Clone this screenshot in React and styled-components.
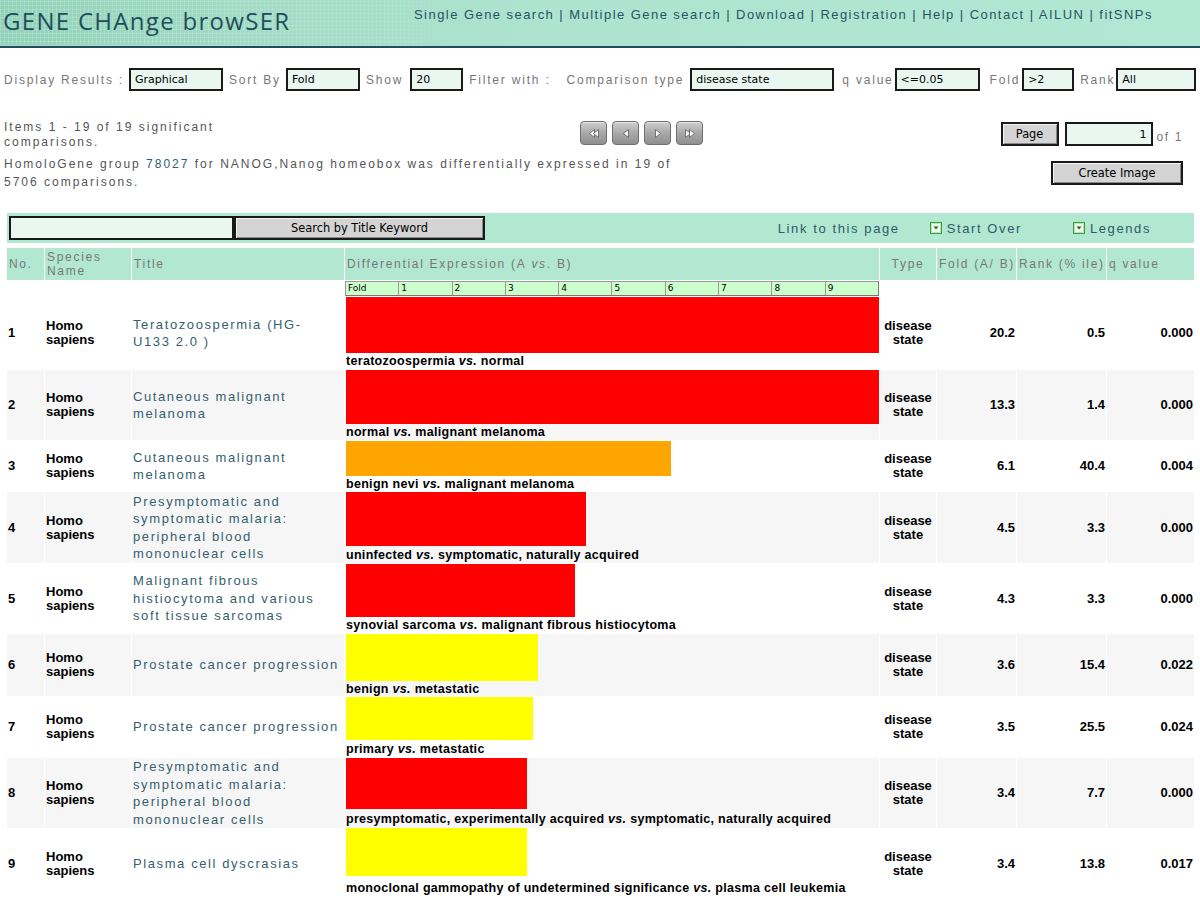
import React from 'react';
import styled, { createGlobalStyle } from 'styled-components';

const MINT = '#b2e7d2';
const RED = '#ff0000';
const ORANGE = '#ffa500';
const YELLOW = '#ffff00';
const COLS = '37px 86px 212px 534px 56px 79px 89px 87px';

const GlobalStyle = createGlobalStyle`
  body {
    margin: 0;
    background: #fff;
    font-family: "Liberation Sans", Arial, sans-serif;
  }
`;

const Page = styled.div`
  width: 1200px;
`;

const Header = styled.header`
  position: relative;
  height: 46px;
  border-bottom: 2px solid #1f4d5a;
  display: grid;
  grid-template-columns: 414px 1fr;
  background: linear-gradient(90deg, #92d2b9 0%, #a3ddc7 25%, #ace4cf 45%, #b0e8d4 100%);
  overflow: hidden;

  &::before {
    content: '';
    position: absolute;
    left: 0;
    top: 0;
    width: 520px;
    height: 100%;
    background:
      repeating-linear-gradient(90deg, rgba(255, 255, 255, 0.16) 0 1px, transparent 1px 4px),
      repeating-linear-gradient(0deg, rgba(255, 255, 255, 0.16) 0 1px, transparent 1px 4px);
    -webkit-mask-image: linear-gradient(90deg, #000 0%, #000 40%, transparent 100%);
    mask-image: linear-gradient(90deg, #000 0%, #000 40%, transparent 100%);
  }
`;

const Logo = styled.div`
  position: relative;
  font-family: "Open Sans", "Noto Sans", sans-serif;
  font-size: 24px;
  letter-spacing: 1.3px;
  color: #1f4d5c;
  padding: 7px 0 0 3px;
  line-height: 28px;
`;

const Nav = styled.nav`
  position: relative;
  font-size: 13px;
  letter-spacing: 1.45px;
  color: #29535f;
  padding-top: 7px;
  line-height: 16px;
  white-space: nowrap;
`;

const FilterBar = styled.div`
  display: flex;
  align-items: center;
  gap: 5px;
  margin-top: 20px;
  padding-left: 4px;
  height: 23px;
`;

const FieldLabel = styled.span`
  font-size: 12px;
  letter-spacing: 1.8px;
  color: #777;
  white-space: nowrap;
  margin-left: ${(p) => p.$space || 0}px;
`;

const Field = styled.div`
  width: ${(p) => p.$w}px;
  height: ${(p) => p.$h || 23}px;
  box-sizing: border-box;
  border: 2px solid #1a1a1a;
  background: #eaf7f1;
  font-family: "DejaVu Sans", sans-serif;
  font-size: 11px;
  color: #000;
  padding: 0 4px;
  display: flex;
  align-items: center;
  justify-content: ${(p) => (p.$right ? 'flex-end' : 'flex-start')};
  margin-left: ${(p) => p.$space || 0}px;
`;

const GreyButton = styled.div`
  width: ${(p) => p.$w}px;
  height: 24px;
  box-sizing: border-box;
  border: 2px solid #1a1a1a;
  box-shadow: inset 1px 1px #f4f4f4, inset -1px -1px #8a8a8a;
  background: #d4d4d4;
  font-family: "DejaVu Sans", sans-serif;
  font-size: 11.4px;
  color: #000;
  display: flex;
  align-items: center;
  justify-content: center;
`;

const Info = styled.div`
  display: grid;
  grid-template-columns: 215px 484px 1fr;
  row-gap: 5px;
  margin-top: 29px;
  padding-left: 4px;
`;

const InfoText = styled.p`
  margin: 0;
  font-size: 12px;
  letter-spacing: 2px;
  color: #555;
  line-height: ${(p) => p.$lh}px;
  grid-column: ${(p) => p.$span || 'auto'};
  max-width: ${(p) => (p.$span ? '690px' : 'none')};
`;

const GeneLink = styled.a`
  color: #2b6273;
  text-decoration: none;
`;

const Pager = styled.div`
  justify-self: end;
  display: flex;
  gap: 5px;
  margin-top: 1px;
`;

const PagerButton = styled.div`
  width: 27px;
  height: 24px;
  box-sizing: border-box;
  border: 1px solid #6f6f6f;
  border-radius: 4px;
  background: linear-gradient(180deg, #cfcfcf 0%, #a9a9a9 50%, #8e8e8e 100%);
  box-shadow: inset 0 1px #e6e6e6;
  display: flex;
  align-items: center;
  justify-content: center;
`;

const PageControls = styled.div`
  grid-column: 3;
  justify-self: end;
  margin-right: 17px;
  margin-top: ${(p) => p.$top}px;
  display: flex;
  align-items: center;
  gap: 6px;
`;

const OfText = styled.span`
  font-size: 12px;
  letter-spacing: 1.6px;
  color: #777;
  margin-left: -2px;
  padding-top: 6px;
`;

const SearchBand = styled.div`
  margin: 22px 6px 0 7px;
  height: 30px;
  background: ${MINT};
  display: flex;
  align-items: center;
  padding-left: 2px;
`;

const BandLinks = styled.div`
  margin-left: auto;
  padding-right: 43px;
  display: flex;
  align-items: center;
`;

const BandLink = styled.span`
  font-size: 13px;
  letter-spacing: 1.6px;
  color: #2e5b68;
  display: flex;
  align-items: center;
  gap: 5px;
  margin-left: ${(p) => p.$space || 0}px;
`;

const Table = styled.div`
  margin: 5px 0 0 7px;
  width: 1187px;
  display: flex;
  flex-direction: column;
  gap: 1px;
`;

const Row = styled.div`
  display: grid;
  grid-template-columns: ${COLS};
  column-gap: 1px;
  height: ${(p) => p.$h}px;
`;

const HeadCell = styled.div`
  background: ${MINT};
  color: #777;
  font-size: 12px;
  letter-spacing: 1.7px;
  line-height: 14px;
  display: flex;
  align-items: center;
  justify-content: ${(p) => (p.$center ? 'center' : 'flex-start')};
  padding-left: ${(p) => (p.$center ? 0 : 2)}px;
  white-space: ${(p) => (p.$wrap ? 'normal' : 'nowrap')};
`;

const Scale = styled.div`
  grid-column: 4;
  display: flex;
  border: 1px solid #9a9a9a;
  border-right-color: #777;
  border-bottom-color: #777;
  background: #ccffcc;
`;

const ScaleCell = styled.div`
  flex: 1;
  border-left: 1px solid #9a9a9a;
  font-family: "DejaVu Sans", sans-serif;
  font-size: 9px;
  line-height: 13px;
  padding-left: 2px;
  color: #000;

  &:first-child {
    border-left: none;
  }
`;

const Cell = styled.div`
  background: ${(p) => (p.$shade ? '#f6f6f6' : '#fff')};
  display: flex;
  align-items: center;
  justify-content: ${(p) => p.$justify || 'flex-start'};
  text-align: ${(p) => p.$align || 'left'};
  font-size: 13px;
  font-weight: bold;
  color: #000;
  line-height: 14px;
  padding: 0 1px;
`;

const TitleText = styled.div`
  font-weight: normal;
  letter-spacing: 1.6px;
  color: #34606f;
  line-height: 17.5px;
  white-space: pre;
`;

const ExprCell = styled.div`
  background: ${(p) => (p.$shade ? '#f6f6f6' : '#fff')};
  display: flex;
  flex-direction: column;
  padding-left: 1px;
`;

const Bar = styled.div`
  height: ${(p) => p.$h}px;
  background: ${(p) => p.$color};
  flex-shrink: 0;
`;

const BarLabel = styled.div`
  flex: 1;
  display: flex;
  align-items: center;
  font-size: 12.5px;
  font-weight: bold;
  letter-spacing: 0.3px;
  white-space: nowrap;
  color: #000;
`;

const rows = [
  { title: 'Teratozoospermia (HG-\nU133 2.0 )', a: 'teratozoospermia', b: 'normal', fold: 20.2, rank: '0.5', q: '0.000', color: RED, h: 72, bar: 56 },
  { title: 'Cutaneous malignant\nmelanoma', a: 'normal', b: 'malignant melanoma', fold: 13.3, rank: '1.4', q: '0.000', color: RED, h: 70, bar: 54 },
  { title: 'Cutaneous malignant\nmelanoma', a: 'benign nevi', b: 'malignant melanoma', fold: 6.1, rank: '40.4', q: '0.004', color: ORANGE, h: 50, bar: 35 },
  { title: 'Presymptomatic and\nsymptomatic malaria:\nperipheral blood\nmononuclear cells', a: 'uninfected', b: 'symptomatic, naturally acquired', fold: 4.5, rank: '3.3', q: '0.000', color: RED, h: 71, bar: 54 },
  { title: 'Malignant fibrous\nhistiocytoma and various\nsoft tissue sarcomas', a: 'synovial sarcoma', b: 'malignant fibrous histiocytoma', fold: 4.3, rank: '3.3', q: '0.000', color: RED, h: 69, bar: 53 },
  { title: 'Prostate cancer progression', a: 'benign', b: 'metastatic', fold: 3.6, rank: '15.4', q: '0.022', color: YELLOW, h: 62, bar: 47 },
  { title: 'Prostate cancer progression', a: 'primary', b: 'metastatic', fold: 3.5, rank: '25.5', q: '0.024', color: YELLOW, h: 60, bar: 43 },
  { title: 'Presymptomatic and\nsymptomatic malaria:\nperipheral blood\nmononuclear cells', a: 'presymptomatic, experimentally acquired', b: 'symptomatic, naturally acquired', fold: 3.4, rank: '7.7', q: '0.000', color: RED, h: 69, bar: 51 },
  { title: 'Plasma cell dyscrasias', a: 'monoclonal gammopathy of undetermined significance', b: 'plasma cell leukemia', fold: 3.4, rank: '13.8', q: '0.017', color: YELLOW, h: 72, bar: 48 },
];

const navItems = ['Single Gene search', 'Multiple Gene search', 'Download', 'Registration', 'Help', 'Contact', 'AILUN', 'fitSNPs'];

const PagerIcon = ({ dir, double }) => {
  const tri = (x) =>
    dir === 'left'
      ? `M${x + 5} 1.5 L${x} 5.5 L${x + 5} 9.5 Z`
      : `M${x} 1.5 L${x + 5} 5.5 L${x} 9.5 Z`;
  return (
    <svg width={double ? 12 : 8} height="11" viewBox={double ? '0 0 12 11' : '0 0 8 11'}>
      <path d={tri(1.5)} fill="#fafafa" stroke="#4a4a4a" strokeWidth="0.7" />
      {double && <path d={tri(5.5)} fill="#fafafa" stroke="#4a4a4a" strokeWidth="0.7" />}
    </svg>
  );
};

const DropIcon = () => (
  <svg width="12" height="12" viewBox="0 0 12 12">
    <rect x="0.5" y="0.5" width="11" height="11" fill="#eefbee" stroke="#3c9b3c" />
    <rect x="1.5" y="1.5" width="9" height="9" fill="none" stroke="#b8e6b8" />
    <path d="M3.5 4.5 L8.5 4.5 L6 7.5 Z" fill="#2d5a2d" />
  </svg>
);

const App = () => {
  return (
    <Page>
      <GlobalStyle />
      <Header>
        <Logo>GENE CHAnge browSER</Logo>
        <Nav>
          {navItems.map((item, i) => (
            <React.Fragment key={item}>
              {i > 0 && ' | '}
              {item}
            </React.Fragment>
          ))}
        </Nav>
      </Header>

      <FilterBar>
        <FieldLabel>Display Results :</FieldLabel>
        <Field $w={94}>Graphical</Field>
        <FieldLabel $space={1}>Sort By</FieldLabel>
        <Field $w={74}>Fold</Field>
        <FieldLabel $space={1}>Show</FieldLabel>
        <Field $w={53} $space={2}>20</Field>
        <FieldLabel $space={1}>Filter with :</FieldLabel>
        <FieldLabel $space={11}>Comparison type</FieldLabel>
        <Field $w={144} $space={1}>disease state</Field>
        <FieldLabel $space={3}>q value</FieldLabel>
        <Field $w={85} $space={-4}>&lt;=0.05</Field>
        <FieldLabel $space={5}>Fold</FieldLabel>
        <Field $w={52} $space={-3}>&gt;2</Field>
        <FieldLabel $space={1}>Rank</FieldLabel>
        <Field $w={80} $space={-4}>All</Field>
      </FilterBar>

      <Info>
        <InfoText $lh={15}>Items 1 - 19 of 19 significant comparisons.</InfoText>
        <Pager>
          <PagerButton><PagerIcon dir="left" double /></PagerButton>
          <PagerButton><PagerIcon dir="left" /></PagerButton>
          <PagerButton><PagerIcon dir="right" /></PagerButton>
          <PagerButton><PagerIcon dir="right" double /></PagerButton>
        </Pager>
        <PageControls $top={-2}>
          <GreyButton $w={58}>Page</GreyButton>
          <Field $w={88} $h={24} $right>1</Field>
          <OfText>of 1</OfText>
        </PageControls>
        <InfoText $lh={18} $span="1 / 3">
          HomoloGene group <GeneLink>78027</GeneLink> for NANOG,Nanog homeobox was differentially expressed in 19 of 5706 comparisons.
        </InfoText>
        <PageControls $top={-1}>
          <GreyButton $w={132}>Create Image</GreyButton>
        </PageControls>
      </Info>

      <SearchBand>
        <Field $w={225} $h={24} />
        <GreyButton $w={251}>Search by Title Keyword</GreyButton>
        <BandLinks>
          <BandLink>Link to this page</BandLink>
          <BandLink $space={30}><DropIcon />Start Over</BandLink>
          <BandLink $space={51}><DropIcon />Legends</BandLink>
        </BandLinks>
      </SearchBand>

      <Table>
        <Row $h={32}>
          <HeadCell>No.</HeadCell>
          <HeadCell $wrap>Species Name</HeadCell>
          <HeadCell>Title</HeadCell>
          <HeadCell>Differential Expression (A&nbsp;<i>vs</i>. B)</HeadCell>
          <HeadCell $center>Type</HeadCell>
          <HeadCell>Fold (A/ B)</HeadCell>
          <HeadCell>Rank (% ile)</HeadCell>
          <HeadCell>q value</HeadCell>
        </Row>
        <Row $h={15}>
          <Scale>
            {['Fold', '1', '2', '3', '4', '5', '6', '7', '8', '9'].map((t) => (
              <ScaleCell key={t}>{t}</ScaleCell>
            ))}
          </Scale>
        </Row>
        {rows.map((r, i) => {
          const shade = i % 2 === 1;
          return (
            <Row key={i} $h={r.h}>
              <Cell $shade={shade}>{i + 1}</Cell>
              <Cell $shade={shade}><span>Homo<br />sapiens</span></Cell>
              <Cell $shade={shade}>
                <TitleText>{r.title}</TitleText>
              </Cell>
              <ExprCell $shade={shade}>
                <Bar $h={r.bar} $color={r.color} style={{ width: `${Math.min(r.fold, 10) * 10}%` }} />
                <BarLabel>
                  <span>
                    {r.a} <i>vs.</i> {r.b}
                  </span>
                </BarLabel>
              </ExprCell>
              <Cell $shade={shade} $justify="center" $align="center"><span>disease<br />state</span></Cell>
              <Cell $shade={shade} $justify="flex-end">{r.fold}</Cell>
              <Cell $shade={shade} $justify="flex-end">{r.rank}</Cell>
              <Cell $shade={shade} $justify="flex-end">{r.q}</Cell>
            </Row>
          );
        })}
      </Table>
    </Page>
  );
};

export default App;
